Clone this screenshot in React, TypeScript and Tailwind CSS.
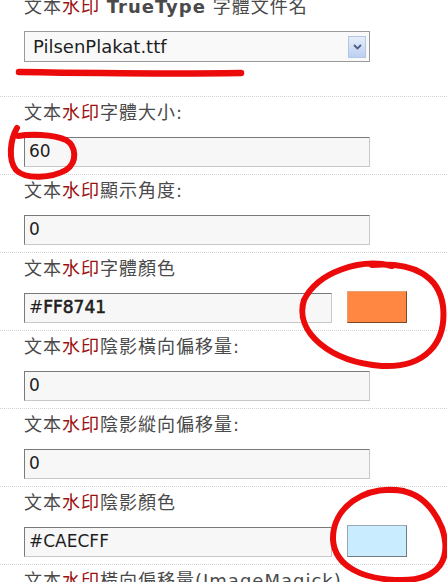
import React from "react";

const labelFont = {
  fontFamily: '"DejaVu Sans", "Noto Sans CJK TC", sans-serif',
};

interface FieldProps {
  label: React.ReactNode;
  value: string;
  swatch?: string;
  heavy?: boolean;
}

const Mark = () => <span className="text-[#9a1010]">水印</span>;

const Label = ({ children }: { children: React.ReactNode }) => (
  <div className="h-[22px] text-[18px] leading-[22px] tracking-[1px] text-[#4a4a4a]">
    文本
    <Mark />
    {children}
  </div>
);

const Field: React.FC<FieldProps> = ({ label, value, swatch, heavy }) => {
  return (
    <div className="border-t border-dotted border-[#d4d4d4] pl-[24px] pt-[5px] pb-[7px]">
      <Label>{label}</Label>
      <div className="mt-[13px] flex items-start">
        <div
          className={`flex h-[30px] items-center border border-t-[#7a7a7a] border-l-[#7a7a7a] border-r-[#c8c8c8] border-b-[#c8c8c8] bg-[#f7f7f7] pl-[4px] text-[17px] text-[#1e1e1e] ${
            swatch ? "w-[308px]" : "w-[346px]"
          }`}
        >
          {heavy ? (
            <>
              <span>#</span>
              <span className="[-webkit-text-stroke:0.6px_#1e1e1e]">
                {value.slice(1)}
              </span>
            </>
          ) : (
            value
          )}
        </div>
        {swatch && (
          <div
            className={`ml-[15px] -mt-[2px] h-[32px] w-[60px] border ${
              swatch === "#FF8741"
                ? "border-t-[#e8a070] border-l-[#e8a070] border-r-[#7a4a2c] border-b-[#7a4a2c]"
                : "border-t-[#9aa8b2] border-l-[#9aa8b2] border-r-[#6f7c86] border-b-[#6f7c86]"
            }`}
            style={{ backgroundColor: swatch }}
          />
        )}
      </div>
    </div>
  );
};

export default function App() {
  return (
    <div
      className="relative h-[582px] w-[447px] overflow-hidden bg-white"
      style={labelFont}
    >
      <div className="-mt-[10px] flex flex-col">
        {/* font file select */}
        <div className="pl-[24px] pt-[6px] pb-[34px]">
          <div className="h-[22px] text-[18px] leading-[22px] tracking-[1px] text-[#4a4a4a]">
            文本
            <Mark /> <span className="font-bold">TrueType</span> 字體文件名
          </div>
          <div className="mt-[13px] flex h-[31px] w-[346px] items-center justify-between border border-[#9a9a9a] bg-[#f9f9f9] pl-[8px] pr-[3px] text-[18px] text-[#1e1e1e]">
            <span>PilsenPlakat.ttf</span>
            <div className="flex h-[22px] w-[18px] items-center justify-center border border-[#b4c6e6] bg-gradient-to-b from-[#e6eefb] to-[#bcd0f0]">
              <svg width="9" height="6" viewBox="0 0 9 6">
                <path
                  d="M1 1 L4.5 4.5 L8 1"
                  fill="none"
                  stroke="#4a5e88"
                  strokeWidth="1.8"
                />
              </svg>
            </div>
          </div>
        </div>

        <Field label="字體大小:" value="60" />
        <Field label="顯示角度:" value="0" />
        <Field label="字體顏色" value="#FF8741" swatch="#FF8741" heavy />
        <Field label="陰影橫向偏移量:" value="0" />
        <Field label="陰影縱向偏移量:" value="0" />
        <Field label="陰影顏色" value="#CAECFF" swatch="#CAECFF" />
        <div className="border-t border-dotted border-[#d4d4d4] pl-[24px] pt-[5px]">
          <Label>橫向偏移量(ImageMagick)</Label>
        </div>
      </div>

      {/* red hand-drawn annotations */}
      <svg
        className="pointer-events-none absolute left-0 top-0"
        width="447"
        height="582"
        viewBox="0 0 447 582"
      >
        <g
          fill="none"
          stroke="#ec0b0b"
          strokeWidth="6"
          strokeLinecap="round"
          strokeLinejoin="round"
        >
          <path d="M19 72 C 80 73, 170 74, 241 73" strokeWidth="6.5" />
          <path d="M17 128 C 10 140, 8 160, 16 170 C 26 180, 52 178, 66 170 C 78 162, 76 146, 66 140 C 52 134, 30 134, 18 136" />
          <path d="M392 266 C 360 258, 318 272, 304 300 C 294 332, 330 362, 382 366 C 424 368, 447 344, 443 306 C 439 276, 414 262, 372 265" />
          <path d="M404 491 C 364 484, 332 508, 333 540 C 335 566, 362 580, 402 580 C 440 580, 452 558, 442 528 C 432 504, 416 489, 390 490" />
        </g>
      </svg>
    </div>
  );
}
